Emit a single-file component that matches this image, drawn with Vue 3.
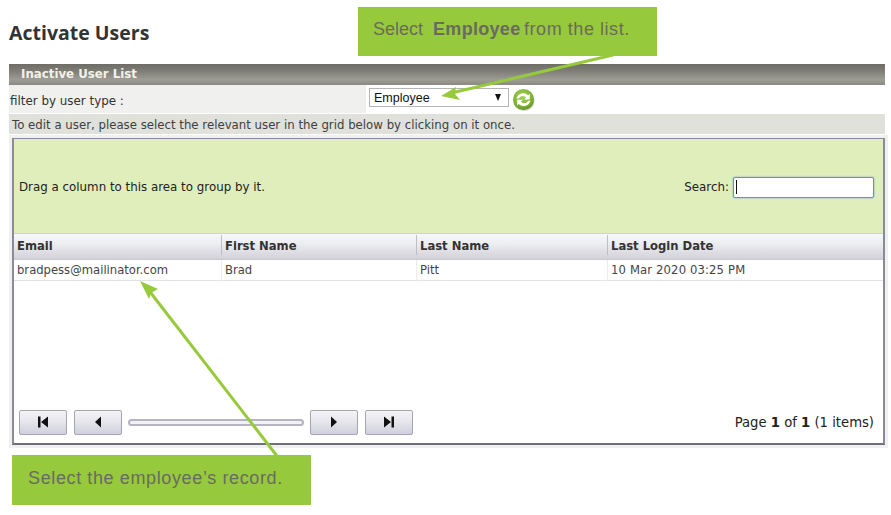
<template>
  <div class="page">
    <h1 class="title">Activate Users</h1>

    <div class="section-bar">Inactive User List</div>

    <div class="filter-row">
      <div class="filter-label">filter by user type :</div>
      <div class="filter-control">
        <div class="fake-select">
          <span>Employee</span>
          <span class="select-caret"></span>
        </div>
        <svg class="refresh" width="24" height="24" viewBox="0 0 24 24">
          <defs>
            <radialGradient id="ball" cx="45%" cy="35%" r="70%">
              <stop offset="0%" stop-color="#a6d25c" />
              <stop offset="70%" stop-color="#7cb02f" />
              <stop offset="100%" stop-color="#5d8a1f" />
            </radialGradient>
          </defs>
          <circle cx="12" cy="12.5" r="10.5" fill="#9a9a9a" opacity="0.5" />
          <circle cx="11.5" cy="11.5" r="10.5" fill="url(#ball)" />
          <path d="M4.500 10.500a7 7 0 0 1 11.700-3.200l1.600-1.500v5.700h-5.600l1.900-1.900a4.300 4.300 0 0 0-7.200 .9z" fill="#fff" />
          <path d="M18.500 12.700a7 7 0 0 1-11.700 3.200l-1.600 1.500v-5.700h5.600l-1.900 1.900a4.300 4.300 0 0 0 7.200-.9z" fill="#fff" />
        </svg>
      </div>
    </div>

    <div class="info-row">To edit a user, please select the relevant user in the grid below by clicking on it once.</div>

    <div class="grid-box">
      <div class="group-panel">
        <span>Drag a column to this area to group by it.</span>
        <label class="search">
          <span>Search:</span>
          <span class="search-input"><i class="cursor"></i></span>
        </label>
      </div>

      <div class="grid-row grid-head">
        <div v-for="col in columns" :key="col" class="cell">{{ col }}</div>
      </div>
      <div v-for="row in rows" :key="row[0]" class="grid-row grid-body">
        <div v-for="val in row" :key="val" class="cell">{{ val }}</div>
      </div>

      <div class="pager">
        <div class="pager-left">
          <button type="button" class="pg-btn wide">
            <svg width="14" height="14" viewBox="0 0 14 14"><path d="M2 1.500h2.500v11H2zM12 1.500v11L5 7z" /></svg>
          </button>
          <button type="button" class="pg-btn">
            <svg width="14" height="14" viewBox="0 0 14 14"><path d="M10 1.500v11L4 7z" /></svg>
          </button>
          <div class="slider"></div>
          <button type="button" class="pg-btn">
            <svg width="14" height="14" viewBox="0 0 14 14"><path d="M4 1.500v11L10 7z" /></svg>
          </button>
          <button type="button" class="pg-btn wide">
            <svg width="14" height="14" viewBox="0 0 14 14"><path d="M2 1.500v11L9 7zM9.500 1.500H12v11H9.500z" /></svg>
          </button>
        </div>
        <div class="pager-text">Page <b>1</b> of <b>1</b> (1 items)</div>
      </div>
    </div>

    <!-- annotations on top of the screenshot -->
    <div class="callout callout-top"><span class="plain">Select&nbsp; </span><b>Employee</b> from the list.</div>
    <div class="callout callout-bottom">Select the employee’s record.</div>
    <svg class="arrows" width="891" height="515" viewBox="0 0 891 515">
      <path d="M613 55 449 93.500" stroke="#97c93c" stroke-width="3" fill="none" />
      <path d="M441 96 456 87 455 94 460 100z" fill="#97c93c" />
      <path d="M277 456 147 288" stroke="#97c93c" stroke-width="3" fill="none" />
      <path d="M140 281 158 289 151 293 149 299z" fill="#97c93c" />
    </svg>
  </div>
</template>

<script setup>
const columns = ['Email', 'First Name', 'Last Name', 'Last Login Date']
const rows = [['bradpess@mailinator.com', 'Brad', 'Pitt', '10 Mar 2020 03:25 PM']]
</script>

<style>
html,
body {
  margin: 0;
  background: #fff;
}
</style>

<style scoped>
.page {
  position: relative;
  width: 891px;
  height: 515px;
  overflow: hidden;
  box-sizing: border-box;
  padding: 0 6px 0 9px;
  font-family: "DejaVu Sans", Verdana, sans-serif;
  font-size: 11.6px;
  color: #333;
}

.title {
  margin: 0;
  padding-top: 20px;
  height: 64px;
  box-sizing: border-box;
  font-family: "Open Sans", "Liberation Sans", sans-serif;
  font-size: 19.500px;
  line-height: 26px;
  font-weight: 700;
  color: #333;
}

.section-bar {
  height: 21px;
  line-height: 21px;
  padding-left: 12px;
  font-weight: 700;
  font-size: 11.8px;
  color: #f2f2ea;
  background: linear-gradient(180deg, #6d6d66 0%, #7f7f78 35%, #9d9d95 75%, #8a8a83 100%);
}

.filter-row {
  display: flex;
  height: 28px;
  margin-bottom: 1px;
}

.filter-label {
  width: 357px;
  padding: 9px 0 0 1px;
  box-sizing: border-box;
  background: #f0f0ee;
  font-size: 11.9px;
  line-height: 14px;
}

.filter-control {
  display: flex;
  align-items: flex-start;
  padding: 3px 0 0 3px;
  gap: 3px;
  height: 28px;
  box-sizing: border-box;
}

.fake-select {
  display: flex;
  align-items: center;
  justify-content: space-between;
  box-sizing: border-box;
  width: 140px;
  height: 19px;
  padding: 0 7px 0 4px;
  border: 1px solid #b5b5b5;
  background: #fff;
  font-family: "Liberation Sans", Arial, sans-serif;
  font-size: 12.5px;
  color: #111;
}

.select-caret {
  width: 0;
  height: 0;
  border-left: 3.5px solid transparent;
  border-right: 3.5px solid transparent;
  border-top: 7px solid #111;
}

.info-row {
  height: 20px;
  line-height: 22px;
  padding-left: 3px;
  background: #e0e1db;
  color: #3f3f3f;
  font-size: 11.76px;
}

.grid-box {
  display: flex;
  flex-direction: column;
  box-sizing: border-box;
  width: 873px;
  height: 307px;
  margin: 4px 0 0 3px;
  border: 1px solid #8f8f9c;
  border-width: 1px 2px 2px 2px;
  border-color: #8a8a98 #8a8a98 #6f6f80 #8a8a98;
  background: #fff;
  box-shadow: 0 0 0 3px #f0f0ee;
}

.group-panel {
  display: flex;
  align-items: center;
  justify-content: space-between;
  height: 95px;
  box-sizing: border-box;
  padding: 2px 9px 0 5px;
  background: #e0eebc;
  border-bottom: 1px solid #cfcfcf;
  color: #222;
  font-size: 11.85px;
}

.search {
  display: flex;
  align-items: center;
  gap: 4px;
}

.search-input {
  display: flex;
  align-items: center;
  box-sizing: border-box;
  width: 141px;
  height: 21px;
  padding-left: 2px;
  background: #fff;
  border: 1px solid #5b93d8;
  border-radius: 2px;
  box-shadow: 0 0 2px #6f9fdc;
}

.cursor {
  display: block;
  width: 1px;
  height: 14px;
  background: #111;
}

.grid-row {
  display: grid;
  grid-template-columns: 207px 195px 191px 1fr;
}

.grid-head {
  height: 26px;
  line-height: 22px;
  font-weight: 700;
  color: #333;
  background: linear-gradient(180deg, #f8f8fa 0%, #ecedf0 40%, #dcdce2 75%, #d3d3da 100%);
  border-bottom: 1px solid #c8c8ce;
  box-sizing: border-box;
}

.grid-head .cell {
  padding-left: 3px;
  border-left: 1px solid #bdbdc2;
  height: 20px;
  margin-top: 1px;
}

.grid-head .cell:first-child {
  border-left: 0;
  padding-left: 3px;
}

.grid-body {
  height: 21px;
  line-height: 21px;
  box-sizing: border-box;
  border-bottom: 1px solid #e2e2e2;
  color: #444;
}

.grid-body .cell {
  padding-left: 3px;
  border-left: 1px solid #ececec;
}

.grid-body .cell:first-child {
  border-left: 0;
}

.grid-body .cell:last-child {
  letter-spacing: 0.15px;
}

.pager {
  display: flex;
  align-items: center;
  justify-content: space-between;
  margin-top: auto;
  height: 26px;
  margin-bottom: 8px;
  padding: 0 9px 0 5px;
}

.pager-left {
  display: flex;
  align-items: center;
  gap: 7px;
}

.pg-btn {
  display: flex;
  align-items: center;
  justify-content: center;
  box-sizing: border-box;
  width: 48px;
  height: 25px;
  padding: 0;
  border: 1px solid #a5a5b4;
  border-radius: 2px;
  background: linear-gradient(180deg, #f4f4f7 0%, #e6e6ec 45%, #cfd0dc 100%);
}

.pg-btn svg {
  fill: #111;
}

.slider {
  box-sizing: border-box;
  width: 176px;
  height: 7px;
  margin: 0 -1px;
  border: 2px solid #b4b4c2;
  border-radius: 4px;
  background: #f2f2f5;
}

.pager-text {
  font-size: 13.2px;
  color: #222;
}

.callout {
  position: absolute;
  box-sizing: border-box;
  background: #97c93c;
  color: #6a6a62;
  font-family: "Liberation Sans", Arial, sans-serif;
  font-size: 18px;
  letter-spacing: 0.55px;
}

.callout b {
  letter-spacing: 0.3px;
  margin-right: -2px;
}

.callout .plain {
  letter-spacing: 0;
}

.callout-top {
  left: 358px;
  top: 7px;
  width: 299px;
  height: 49px;
  padding-left: 15px;
  line-height: 45px;
}

.callout-bottom {
  left: 12px;
  top: 455px;
  width: 299px;
  height: 50px;
  padding-left: 16px;
  line-height: 47px;
  letter-spacing: 0.62px;
}

.arrows {
  position: absolute;
  left: 0;
  top: 0;
  pointer-events: none;
}
</style>
